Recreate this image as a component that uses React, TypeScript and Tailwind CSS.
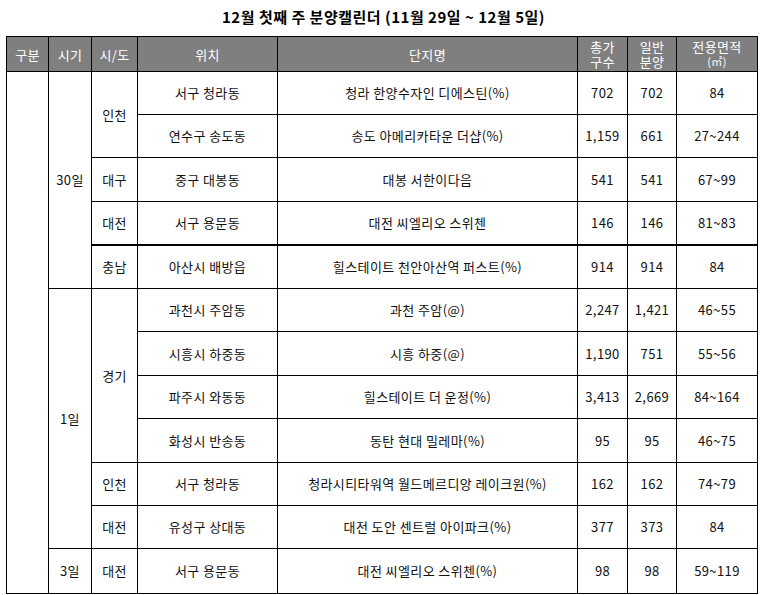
import React from "react";

interface Row {
  period?: { label: string; span: number };
  region?: { label: string; span: number };
  location: string;
  complex: string;
  total: string;
  general: string;
  area: string;
  height: string;
  thick?: boolean;
}

const rows: Row[] = [
  { period: { label: "30일", span: 5 }, region: { label: "인천", span: 2 }, location: "서구 청라동", complex: "청라 한양수자인 디에스틴(%)", total: "702", general: "702", area: "84", height: "h-[43px]" },
  { location: "연수구 송도동", complex: "송도 아메리카타운 더샵(%)", total: "1,159", general: "661", area: "27~244", height: "h-[43px]" },
  { region: { label: "대구", span: 1 }, location: "중구 대봉동", complex: "대봉 서한이다음", total: "541", general: "541", area: "67~99", height: "h-[44px]" },
  { region: { label: "대전", span: 1 }, location: "서구 용문동", complex: "대전 씨엘리오 스위첸", total: "146", general: "146", area: "81~83", height: "h-[43px]", thick: true },
  { region: { label: "충남", span: 1 }, location: "아산시 배방읍", complex: "힐스테이트 천안아산역 퍼스트(%)", total: "914", general: "914", area: "84", height: "h-[44px]" },
  { period: { label: "1일", span: 6 }, region: { label: "경기", span: 4 }, location: "과천시 주암동", complex: "과천 주암(@)", total: "2,247", general: "1,421", area: "46~55", height: "h-[43px]" },
  { location: "시흥시 하중동", complex: "시흥 하중(@)", total: "1,190", general: "751", area: "55~56", height: "h-[44px]" },
  { location: "파주시 와동동", complex: "힐스테이트 더 운정(%)", total: "3,413", general: "2,669", area: "84~164", height: "h-[43px]" },
  { location: "화성시 반송동", complex: "동탄 현대 밀레마(%)", total: "95", general: "95", area: "46~75", height: "h-[44px]" },
  { region: { label: "인천", span: 1 }, location: "서구 청라동", complex: "청라시티타워역 월드메르디앙 레이크원(%)", total: "162", general: "162", area: "74~79", height: "h-[43px]" },
  { region: { label: "대전", span: 1 }, location: "유성구 상대동", complex: "대전 도안 센트럴 아이파크(%)", total: "377", general: "373", area: "84", height: "h-[43px]" },
  { period: { label: "3일", span: 1 }, region: { label: "대전", span: 1 }, location: "서구 용문동", complex: "대전 씨엘리오 스위첸(%)", total: "98", general: "98", area: "59~119", height: "h-[45px]" },
];

const cell = "border border-black text-center align-middle p-0";
const head = "border border-black text-center align-middle p-0 font-normal leading-[15px]";

export default function App() {
  return (
    <div
      className="w-[763px] h-[595px] overflow-hidden bg-white text-[13px] text-[#111]"
      style={{ fontFamily: '"Noto Sans CJK KR", "Noto Sans", sans-serif' }}
    >
      <div className="h-[36px] flex items-center justify-center pl-[4px] pb-[1px]">
        <h1 className="text-[15px] font-bold text-black tracking-[0.5px]">
          12월 첫째 주 분양캘린더 (11월 29일 ~ 12월 5일)
        </h1>
      </div>

      <table className="ml-[6px] w-[751px] table-fixed border-collapse leading-[16px] tracking-[0.4px]">
        <colgroup>
          <col className="w-[42px]" />
          <col className="w-[43px]" />
          <col className="w-[46px]" />
          <col className="w-[140px]" />
          <col className="w-[300px]" />
          <col className="w-[50px]" />
          <col className="w-[49px]" />
          <col className="w-[81px]" />
        </colgroup>
        <thead>
          <tr className="h-[35px] bg-[#7f7f7f] text-white">
            <th className={head}>구분</th>
            <th className={head}>시기</th>
            <th className={head}>시/도</th>
            <th className={head}>위치</th>
            <th className={head}>단지명</th>
            <th className={head}>
              <div>총가</div>
              <div>구수</div>
            </th>
            <th className={head}>
              <div>일반</div>
              <div>분양</div>
            </th>
            <th className={head}>
              <div>전용면적</div>
              <div className="text-[11px]">(㎡)</div>
            </th>
          </tr>
        </thead>
        <tbody>
          {rows.map((row, i) => {
            const line = row.thick ? "border-b-2" : "";
            return (
              <tr key={i} className={row.height}>
                {i === 0 && <td className={cell} rowSpan={rows.length} />}
                {row.period && (
                  <td className={cell} rowSpan={row.period.span}>
                    {row.period.label}
                  </td>
                )}
                {row.region && (
                  <td className={`${cell} ${line}`} rowSpan={row.region.span}>
                    {row.region.label}
                  </td>
                )}
                <td className={`${cell} ${line}`}>{row.location}</td>
                <td className={`${cell} ${line}`}>{row.complex}</td>
                <td className={`${cell} ${line}`}>{row.total}</td>
                <td className={`${cell} ${line}`}>{row.general}</td>
                <td className={`${cell} ${line}`}>{row.area}</td>
              </tr>
            );
          })}
        </tbody>
      </table>
    </div>
  );
}
